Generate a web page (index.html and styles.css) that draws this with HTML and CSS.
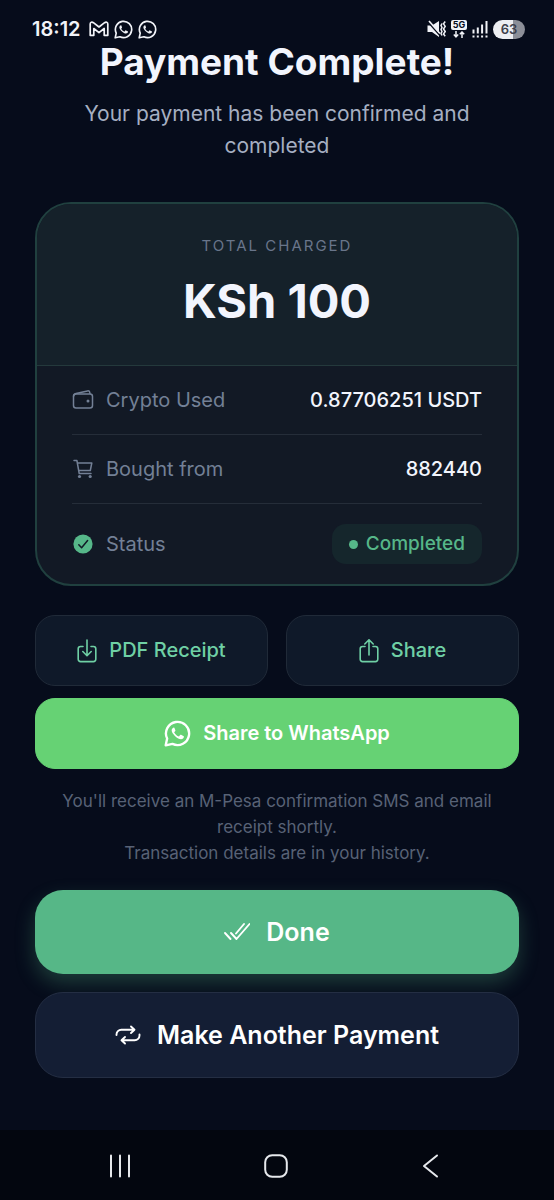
FILE: index.html
```html
<!DOCTYPE html>
<html lang="en">
<head>
<meta charset="utf-8">
<meta name="viewport" content="width=device-width, initial-scale=1">
<title>Payment Complete</title>
<link rel="stylesheet" href="styles.css">
</head>
<body>
<svg class="defs" aria-hidden="true">
  <symbol id="whatsapp" viewBox="0 0 24 24">
    <path d="M1.500 22.500l1.300-6A10.300 10.300 0 1 1 7.500 21.200Z" fill="none" stroke="currentColor" stroke-width="2.100" stroke-linejoin="round"/>
    <path d="M8.400 6.800C8 6.800 6.800 7.600 6.800 9.200c0 1.400 1 3.200 2.900 5 2 1.900 4 2.900 5.400 2.900 1.500 0 2.500-1.100 2.600-2.200 0-.4-.1-.5-.5-.7l-2-1c-.4-.2-.6-.1-.9.200l-.8 1c-.2.300-.5.300-.8.100-1.500-.7-2.700-1.800-3.500-3.200-.2-.3-.1-.5.100-.7l.7-.8c.2-.3.200-.5.100-.8l-.8-2c-.2-.4-.4-.4-.9-.4Z" fill="currentColor"/>
  </symbol>
</svg>
<div class="screen">
  <header class="status-bar">
    <div class="status-left">
      <time class="clock">18:12</time>
      <svg class="gmail-icon" viewBox="0 0 20 16" role="img" aria-label="Gmail"><path d="M1.200 3v11.300h3.600V7.500l5.200 4.200 5.200-4.200v6.800h3.600V3c0-1.800-1.800-2.300-3.200-1.300L10 6 4.400 1.700C3 .7 1.200 1.200 1.200 3Z" fill="none" stroke="currentColor" stroke-width="1.700" stroke-linejoin="round"/></svg>
      <svg class="chat-icon" role="img" aria-label="WhatsApp"><use href="#whatsapp"/></svg>
      <svg class="chat-icon" role="img" aria-label="WhatsApp"><use href="#whatsapp"/></svg>
    </div>
    <div class="status-right">
      <svg class="mute-icon" viewBox="0 0 19 18" role="img" aria-label="Vibrate"><path d="M.5 5.500H5l7-4.500v16l-7-5H.5Z" fill="currentColor"/><path d="M1.500 2.500l11 12.500" stroke="#060c1b" stroke-width="1.500"/><path d="M2 1l11 12.500" stroke="currentColor" stroke-width="1.600"/><path d="M15 3.500l-1 2 1 2-1 2 1 2-1 2 1 2M18.200 1.500l-1.700 2.300 1.700 2.500L16.500 9l1.700 2.500-1.700 2.500 1.700 2.300" fill="none" stroke="currentColor" stroke-width="1.500"/></svg>
      <span class="network"><span class="network-label">5G</span><svg class="data-icon" viewBox="0 0 12 7" aria-hidden="true"><path d="M3 0v5.500M.8 3.500L3 5.800l2.200-2.300M9 7V1.200M6.800 3.200L9 1l2.200 2.200" fill="none" stroke="currentColor" stroke-width="1.500"/></svg></span>
      <svg class="signal-icon" viewBox="0 0 16 17" role="img" aria-label="Signal"><path d="M1.500 8.500v4M5.800 6.500v6M10.100 3.500v9M14.500 0v12.500M1.500 14.500v2M5.800 14.500v2M10.100 14.500v2M14.500 14.500v2" stroke="currentColor" stroke-width="2"/></svg>
      <span class="battery">63</span>
    </div>
  </header>

  <main class="content">
    <h1 class="title">Payment Complete!</h1>
    <p class="subtitle">Your payment has been confirmed and completed</p>

    <section class="card">
      <div class="total">
        <p class="total-label">TOTAL CHARGED</p>
        <p class="total-amount">KSh 100</p>
      </div>
      <dl class="details">
        <div class="row">
          <dt class="label"><svg class="row-icon" viewBox="0 0 22 22" aria-hidden="true"><g fill="none" stroke="currentColor" stroke-width="1.500" stroke-linejoin="round"><rect x="1.500" y="5" width="19" height="14" rx="2.500"/><path d="M1.500 7.500c0-2 .8-2.700 2.500-3.100l11.500-2.500c1.300-.2 2 .3 2.200 1.300l.3 1.800"/></g><circle cx="16" cy="12" r="1.500" fill="currentColor"/></svg>Crypto Used</dt>
          <dd class="value">0.87706251 USDT</dd>
        </div>
        <div class="row">
          <dt class="label"><svg class="row-icon" viewBox="0 0 22 22" aria-hidden="true"><path d="M2 2.500h2.900L7.200 15.500H19M5.300 5h14.500l-1.500 7.500H6.700" fill="none" stroke="currentColor" stroke-width="1.500" stroke-linecap="round" stroke-linejoin="round"/><circle cx="7.500" cy="18.500" r="1.600" fill="currentColor"/><circle cx="18.200" cy="18.500" r="1.600" fill="currentColor"/></svg>Bought from</dt>
          <dd class="value">882440</dd>
        </div>
        <div class="row row-status">
          <dt class="label"><svg class="row-icon" viewBox="0 0 22 22" aria-hidden="true"><circle cx="11" cy="11" r="9.600" fill="#56b789"/><path d="M6.800 11.800l2.800 3L15.600 7.500" fill="none" stroke="#121a27" stroke-width="1.500" stroke-linecap="round" stroke-linejoin="round"/></svg>Status</dt>
          <dd class="badge">Completed</dd>
        </div>
      </dl>
    </section>

    <div class="share-row">
      <button class="btn btn-outline" type="button"><svg class="share-icon" viewBox="0 0 20 24" aria-hidden="true"><path d="M6 7.500H3.500a2.300 2.300 0 0 0-2.300 2.300v10.500a2.300 2.300 0 0 0 2.300 2.300h13a2.300 2.300 0 0 0 2.300-2.300V9.800a2.300 2.300 0 0 0-2.300-2.300H14M10 1v15.500M5.800 12.500l4.200 4.200 4.200-4.200" fill="none" stroke="currentColor" stroke-width="1.600" stroke-linecap="round" stroke-linejoin="round"/></svg>PDF Receipt</button>
      <button class="btn btn-outline" type="button"><svg class="share-icon" viewBox="0 0 20 24" aria-hidden="true"><path d="M6 7.500H3.500a2.300 2.300 0 0 0-2.300 2.300v10.500a2.300 2.300 0 0 0 2.300 2.300h13a2.300 2.300 0 0 0 2.300-2.300V9.800a2.300 2.300 0 0 0-2.300-2.300H14M10 16V1M5.800 5l4.200-4.200L14.200 5" fill="none" stroke="currentColor" stroke-width="1.600" stroke-linecap="round" stroke-linejoin="round"/></svg>Share</button>
    </div>
    <button class="btn btn-whatsapp" type="button"><svg class="whatsapp-icon" aria-hidden="true"><use href="#whatsapp"/></svg>Share to WhatsApp</button>

    <p class="note">You'll receive an M-Pesa confirmation SMS and email receipt shortly.<br>Transaction details are in your history.</p>

    <div class="actions">
      <button class="btn btn-large btn-done" type="button"><svg class="large-icon" viewBox="0 0 26 26" aria-hidden="true"><path d="M1 14l5.500 6M7 14l5.500 6L25.500 5M12 14.500L20 5" fill="none" stroke="currentColor" stroke-width="1.900" stroke-linecap="round" stroke-linejoin="round"/></svg>Done</button>
      <button class="btn btn-large btn-again" type="button"><svg class="large-icon" viewBox="0 0 26 26" aria-hidden="true"><path d="M1.500 13v-.5A4.800 4.800 0 0 1 6.300 7.700H19M16 4.500l3.500 3.200L16 11M24.500 12.500v1a4.800 4.800 0 0 1-4.800 4.800H7M10 15l-3.500 3.300L10 21.500" fill="none" stroke="currentColor" stroke-width="1.900" stroke-linecap="round" stroke-linejoin="round"/></svg>Make Another Payment</button>
    </div>
  </main>

  <nav class="nav-bar" aria-label="System">
    <button class="nav-btn" type="button" aria-label="Recents"><svg class="nav-icon" viewBox="0 0 28 28" aria-hidden="true"><path d="M5 3.500v21M14 3.500v21M23 3.500v21" stroke="currentColor" stroke-width="2" stroke-linecap="round"/></svg></button>
    <button class="nav-btn" type="button" aria-label="Home"><svg class="nav-icon" viewBox="0 0 28 28" aria-hidden="true"><rect x="3.200" y="3.200" width="21.600" height="21.600" rx="7" fill="none" stroke="currentColor" stroke-width="2"/></svg></button>
    <button class="nav-btn" type="button" aria-label="Back"><svg class="nav-icon" viewBox="0 0 28 28" aria-hidden="true"><path d="M20 3.500L7 14l13 10.500" fill="none" stroke="currentColor" stroke-width="2" stroke-linecap="round" stroke-linejoin="round"/></svg></button>
  </nav>
</div>
</body>
</html>
```

FILE: styles.css
```css
*, *::before, *::after { box-sizing: border-box; }

body, h1, p, dl, dd { margin: 0; }

body {
  background: #060c1b;
  color: #f2f5fd;
  font-family: Inter, "Liberation Sans", sans-serif;
}

svg { display: block; flex: none; }

.defs { position: absolute; width: 0; height: 0; }

.screen {
  display: flex;
  flex-direction: column;
  min-height: 100vh;
}

.status-bar {
  display: flex;
  justify-content: space-between;
  padding: 18px 29px 0 32px;
  height: 40px;
  color: #f1f3f8;
}

.status-left, .status-right { display: flex; align-items: center; }
.status-left { gap: 5px; }
.status-right { gap: 5px; }

.clock { font-size: 20px; font-weight: 600; line-height: 22px; margin-right: 3px; }
.gmail-icon { width: 20px; height: 16px; }
.chat-icon { width: 19px; height: 19px; }
.mute-icon { width: 19px; height: 18px; }

.network { display: flex; flex-direction: column; align-items: center; gap: 1px; }
.network-label {
  width: 16px;
  border-radius: 2px;
  background: #f1f3f8;
  color: #060c1b;
  font-size: 9px;
  font-weight: 700;
  line-height: 10px;
  text-align: center;
}
.data-icon { width: 12px; height: 7px; }
.signal-icon { width: 16px; height: 17px; }

.battery {
  width: 32px;
  border-radius: 10px;
  background: linear-gradient(90deg, #eceef2 63%, #8c8f98 63%);
  color: #3d404b;
  font-size: 13px;
  font-weight: 600;
  line-height: 19px;
  text-align: center;
}

.content {
  flex: 1;
  padding: 0 35px 51px;
  text-align: center;
}

.title { font-size: 37px; font-weight: 700; line-height: 44px; }

.subtitle {
  margin-top: 14px;
  padding: 0 30px;
  color: #a5afc2;
  font-size: 21px;
  line-height: 32px;
}

.card {
  margin-top: 40px;
  border: 2px solid #20403f;
  border-radius: 36px;
  background: #121925;
  overflow: hidden;
}

.total {
  padding: 30px 20px 32px;
  border-bottom: 1px solid #24393c;
  background: #15212a;
}

.total-label {
  color: #69758a;
  font-size: 15px;
  letter-spacing: 2px;
  line-height: 24px;
}

.total-amount {
  margin-top: 11px;
  font-size: 47px;
  font-weight: 700;
  line-height: 64px;
}

.details { padding: 0 35px; }

.row {
  display: flex;
  align-items: center;
  justify-content: space-between;
  min-height: 69px;
  border-bottom: 1px solid #252d39;
}

.row-status { min-height: 80px; border-bottom: 0; }

.label {
  display: flex;
  align-items: center;
  gap: 12px;
  color: #738096;
  font-size: 20px;
  line-height: 28px;
}

.row-icon { width: 22px; height: 22px; }

.value { font-size: 20px; font-weight: 500; line-height: 28px; }

.badge {
  display: flex;
  align-items: center;
  gap: 8px;
  padding: 6px 17px;
  border-radius: 14px;
  background: #15262c;
  color: #56b789;
  font-size: 19px;
  font-weight: 500;
  line-height: 28px;
}

.badge::before {
  width: 9px;
  height: 9px;
  border-radius: 50%;
  background: currentColor;
  content: "";
}

.share-row {
  display: grid;
  grid-template-columns: 1fr 1fr;
  gap: 18px;
  margin-top: 29px;
}

.btn {
  display: flex;
  align-items: center;
  justify-content: center;
  gap: 12px;
  width: 100%;
  padding: 20px;
  border: 1px solid transparent;
  border-radius: 20px;
  color: #fff;
  font-family: inherit;
  font-size: 20px;
  font-weight: 500;
  line-height: 29px;
  cursor: pointer;
}

.btn-outline { border-color: #202a38; background: #0f1929; color: #6fd0a5; }
.share-icon { width: 20px; height: 24px; }

.btn-whatsapp { margin-top: 12px; background: #66d274; border-color: #66d274; font-weight: 600; }
.whatsapp-icon { width: 27px; height: 27px; }

.note {
  margin-top: 19px;
  padding: 0 26px;
  color: #586276;
  font-size: 17px;
  line-height: 26px;
}

.actions { display: grid; gap: 18px; margin-top: 24px; }

.btn-large {
  gap: 16px;
  padding: 27px 20px;
  border-radius: 28px;
  font-size: 25px;
  font-weight: 600;
  line-height: 30px;
}

.large-icon { width: 26px; height: 26px; }

.btn-done {
  border: 0;
  background: #56b787;
  box-shadow: 0 9px 20px rgba(86, 183, 135, 0.28);
}

.btn-again {
  position: relative;
  border-color: #242e43;
  background: #141e34;
}

.nav-bar {
  display: flex;
  justify-content: space-between;
  padding: 22px 109px 20px 106px;
  background: #03060f;
  color: #e6e8ec;
}

.nav-btn { padding: 0; border: 0; background: none; color: inherit; cursor: pointer; }
.nav-icon { width: 28px; height: 28px; }
```
